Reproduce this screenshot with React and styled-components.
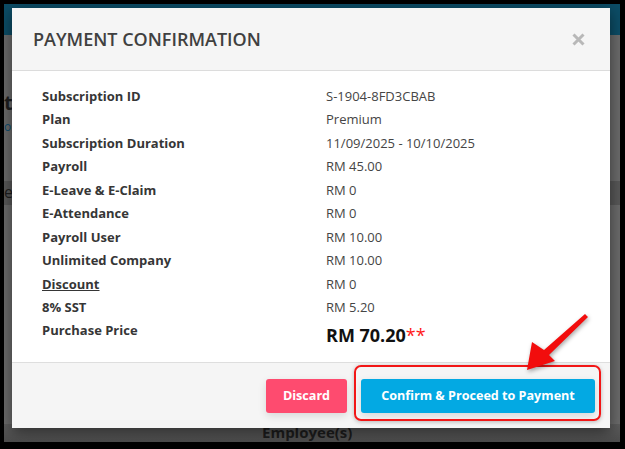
import { Fragment } from "react"
import styled, { createGlobalStyle } from "styled-components"

const GlobalStyle = createGlobalStyle`
  html, body {
    margin: 0;
    padding: 0;
    background: #000;
  }
  * {
    box-sizing: border-box;
  }
`

// Page behind the modal (already darkened by the backdrop)
const Frame = styled.div`
  width: 625px;
  height: 449px;
  padding: 4px 5px 7px 4px;
  background: #000;
  font-family: "Open Sans", "Noto Sans", sans-serif;
`

const Page = styled.div`
  position: relative;
  height: 100%;
  overflow: hidden;
  background: #6b6b6b;
  display: flex;
  flex-direction: column;
`

const TopBar = styled.div`
  height: 31px;
  flex: none;
  background: #0c4d66;
`

const PageBody = styled.div`
  flex: 1;
  display: flex;
  flex-direction: column;
`

const PageTitle = styled.div`
  margin-top: 56px;
  height: 24px;
  font-size: 20px;
  font-weight: 700;
  color: #1e1e1e;
  line-height: 24px;
`

const PageLink = styled.div`
  margin-top: 4px;
  font-size: 12px;
  color: #0c4d70;
  line-height: 16px;
`

const Band = styled.div`
  margin-top: 46px;
  height: 24px;
  background: ${({ $shade }) => $shade};
  font-size: 16px;
  color: #1e1e1e;
  line-height: 22px;
`

const TableHead = styled.div`
  margin-top: auto;
  height: 18px;
  padding-left: 258px;
  background: linear-gradient(#5d5d5d, #4c4c4c);
  font-size: 15px;
  font-weight: 700;
  color: #1c1c1c;
  line-height: 16px;
`

// Modal
const Modal = styled.div`
  position: absolute;
  left: 8px;
  top: 4px;
  width: 598px;
  background: #fff;
  box-shadow: 0 4px 14px rgba(0, 0, 0, 0.5);
  display: flex;
  flex-direction: column;
`

const Header = styled.div`
  height: 63px;
  padding: 0 25px 0 21px;
  background: #f5f5f5;
  border-bottom: 1px solid #dcdcdc;
  display: flex;
  align-items: center;
  justify-content: space-between;
`

const Title = styled.h4`
  margin: 0;
  font-size: 18px;
  font-weight: 600;
  color: #404040;
`

const Close = styled.button`
  border: 0;
  padding: 0;
  background: none;
  display: flex;
`

const Body = styled.div`
  padding: 13px 20px 11px 30px;
  display: grid;
  grid-template-columns: 284px 1fr;
  grid-template-rows: repeat(10, 23.5px) 32px;
  align-items: center;
`

const Label = styled.div`
  font-size: 13px;
  font-weight: 700;
  color: #363636;
  text-decoration: ${({ $underline }) => ($underline ? "underline" : "none")};
  align-self: ${({ $top }) => ($top ? "start" : "center")};
  line-height: ${({ $top }) => ($top ? "23.5px" : "normal")};
`

const Value = styled.div`
  font-size: 13px;
  color: #454545;
`

const Total = styled.div`
  align-self: start;
  font-size: 18px;
  font-weight: 700;
  color: #111;
  line-height: 31px;
  padding-top: 1px;
`

const Stars = styled.span`
  color: #ff1a1a;
  font-weight: 400;
  font-size: 18px;
`

const Footer = styled.div`
  height: 66px;
  padding: 0 15px;
  background: #f5f5f5;
  border-top: 1px solid #dedede;
  display: flex;
  align-items: center;
  justify-content: flex-end;
  gap: 14px;
`

const Button = styled.button`
  height: 34px;
  width: ${({ $w }) => $w}px;
  padding: 0;
  border: 0;
  border-radius: 3px;
  background: ${({ $bg }) => $bg};
  color: #fff;
  font-family: "Open Sans", "Noto Sans", sans-serif;
  font-size: 12.6px;
  font-weight: 700;
  box-shadow: 0 3px 8px rgba(0, 0, 0, 0.12);
`

// Annotation overlay
const Highlight = styled.div`
  position: absolute;
  left: 350px;
  top: 361px;
  width: 247px;
  height: 56px;
  border: 2px solid #f21616;
  border-radius: 7px;
  box-shadow: 0 1px 4px rgba(0, 0, 0, 0.25);
`

const ArrowLayer = styled.svg`
  position: absolute;
  left: 0;
  top: 0;
  pointer-events: none;
  filter: drop-shadow(1px 2px 2px rgba(0, 0, 0, 0.35));
`

const rows = [
  ["Subscription ID", "S-1904-8FD3CBAB"],
  ["Plan", "Premium"],
  ["Subscription Duration", "11/09/2025 - 10/10/2025"],
  ["Payroll", "RM 45.00"],
  ["E-Leave & E-Claim", "RM 0"],
  ["E-Attendance", "RM 0"],
  ["Payroll User", "RM 10.00"],
  ["Unlimited Company", "RM 10.00"],
  ["Discount", "RM 0", true],
  ["8% SST", "RM 5.20"],
]

export default function App() {
  return (
    <Frame>
      <GlobalStyle />
      <Page>
        <TopBar />
        <PageBody>
          <PageTitle>ti</PageTitle>
          <PageLink>os</PageLink>
          <Band $shade="#585858">e</Band>
          <TableHead>Employee(s)</TableHead>
        </PageBody>

        <Modal>
          <Header>
            <Title>PAYMENT CONFIRMATION</Title>
            <Close aria-label="Close">
              <svg width="13" height="13" viewBox="0 0 13 13">
                <path d="M1.5 1.5 L11.5 11.5 M11.5 1.5 L1.5 11.5" stroke="#b8b8b8" strokeWidth="3" />
              </svg>
            </Close>
          </Header>
          <Body>
            {rows.map(([label, value, underline]) => (
              <Fragment key={label}>
                <Label $underline={underline}>{label}</Label>
                <Value>{value}</Value>
              </Fragment>
            ))}
            <Label $top>Purchase Price</Label>
            <Total>
              RM 70.20<Stars>**</Stars>
            </Total>
          </Body>
          <Footer>
            <Button $w={81} $bg="#fe4b6f">Discard</Button>
            <Button $w={234} $bg="#03a9e3">Confirm &amp; Proceed to Payment</Button>
          </Footer>
        </Modal>

        <Highlight />
        <ArrowLayer width="616" height="438" viewBox="0 0 616 438">
          <polygon
            points="523,366 528,338 540,346 581,310 584,313 545,351 551,357"
            fill="#f20d0d"
          />
        </ArrowLayer>
      </Page>
    </Frame>
  )
}
